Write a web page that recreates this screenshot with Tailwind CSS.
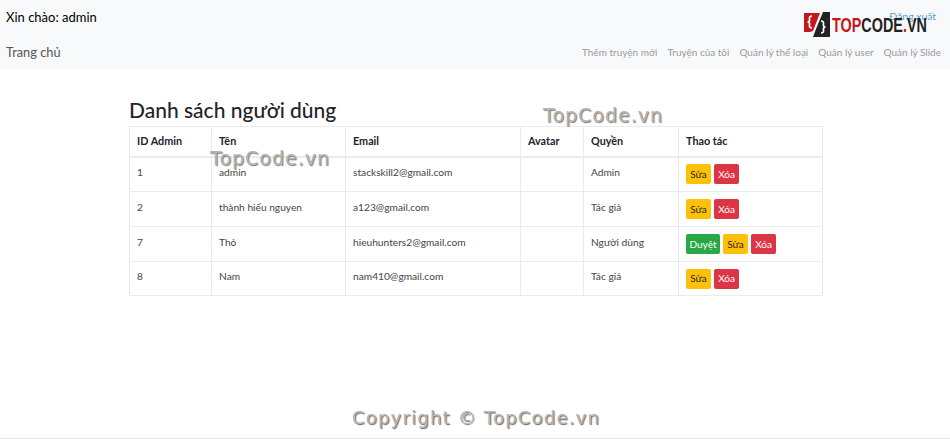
<!DOCTYPE html>
<html lang="en">
<head>
  <meta charset="UTF-8" />
  <title>Danh sách người dùng</title>
  <script src="https://cdn.jsdelivr.net/npm/@tailwindcss/browser@4"></script>
</head>
<body class="relative h-[439px] overflow-hidden bg-white font-['Lato','Noto_Sans',sans-serif] text-[#212529]">
  <!-- navbar -->
  <div class="h-[69px] bg-[#f8f9fa] px-[6px]">
    <div class="flex h-[36px] items-center justify-between">
      <span class="text-[13px] text-black">Xin chào: admin</span>
      <a class="mr-[8px] mt-[-2px] text-[10.4px] text-[#5a9fd0]">Đăng xuất</a>
    </div>
    <div class="flex h-[33px] items-center justify-between">
      <span class="text-[12.8px] text-[#555]">Trang chủ</span>
      <div class="mr-[3px] flex gap-[10px] text-[10px] text-[#9a9a9a]">
        <a>Thêm truyện mới</a>
        <a>Truyện của tôi</a>
        <a>Quản lý thể loại</a>
        <a>Quản lý user</a>
        <a>Quản lý Slide</a>
      </div>
    </div>
  </div>

  <!-- content -->
  <div class="ml-[129px] w-[694px]">
    <h2 class="mt-[26px] mb-[1px] h-[30px] text-[21px] leading-[30px] font-medium">Danh sách người dùng</h2>
    <table class="w-[693px] table-fixed border-collapse text-[10.2px] text-[#444]">
      <colgroup>
        <col class="w-[82px]" /><col class="w-[134px]" /><col class="w-[175px]" /><col class="w-[63px]" /><col class="w-[95px]" /><col class="w-[144px]" />
      </colgroup>
      <thead class="text-[10.8px] text-[#212529]">
        <tr class="h-[30px]">
          <th class="border border-b-2 border-[#e9ecef] pl-[7px] text-left font-bold">ID Admin</th>
          <th class="border border-b-2 border-[#e9ecef] pl-[7px] text-left font-bold">Tên</th>
          <th class="border border-b-2 border-[#e9ecef] pl-[7px] text-left font-bold">Email</th>
          <th class="border border-b-2 border-[#e9ecef] pl-[7px] text-left font-bold">Avatar</th>
          <th class="border border-b-2 border-[#e9ecef] pl-[7px] text-left font-bold">Quyền</th>
          <th class="border border-b-2 border-[#e9ecef] pl-[7px] text-left font-bold">Thao tác</th>
        </tr>
      </thead>
      <tbody>
        <tr class="h-[35px]">
          <td class="border border-[#e9ecef] pl-[7px] pb-[4px]">1</td>
          <td class="border border-[#e9ecef] pl-[7px] pb-[4px]">admin</td>
          <td class="border border-[#e9ecef] pl-[7px] pb-[4px]">stackskill2@gmail.com</td>
          <td class="border border-[#e9ecef] pl-[7px]"></td>
          <td class="border border-[#e9ecef] pl-[7px] pb-[4px]">Admin</td>
          <td class="border border-[#e9ecef] pl-[7px]">
            <div class="flex gap-[3px]">
              <span class="flex h-[20px] w-[25px] items-center justify-center rounded-[2px] bg-[#ffc107] text-[10px] text-[#212529]">Sửa</span>
              <span class="flex h-[20px] w-[25px] items-center justify-center rounded-[2px] bg-[#dc3545] text-[10px] text-white">Xóa</span>
            </div>
          </td>
        </tr>
        <tr class="h-[35px]">
          <td class="border border-[#e9ecef] pl-[7px] pb-[3px]">2</td>
          <td class="border border-[#e9ecef] pl-[7px] pb-[3px]">thành hiếu nguyen</td>
          <td class="border border-[#e9ecef] pl-[7px] pb-[3px]">a123@gmail.com</td>
          <td class="border border-[#e9ecef] pl-[7px]"></td>
          <td class="border border-[#e9ecef] pl-[7px] pb-[3px]">Tác giả</td>
          <td class="border border-[#e9ecef] pl-[7px]">
            <div class="flex gap-[3px]">
              <span class="flex h-[20px] w-[25px] items-center justify-center rounded-[2px] bg-[#ffc107] text-[10px] text-[#212529]">Sửa</span>
              <span class="flex h-[20px] w-[25px] items-center justify-center rounded-[2px] bg-[#dc3545] text-[10px] text-white">Xóa</span>
            </div>
          </td>
        </tr>
        <tr class="h-[35px]">
          <td class="border border-[#e9ecef] pl-[7px] pb-[3px]">7</td>
          <td class="border border-[#e9ecef] pl-[7px] pb-[3px]">Thỏ</td>
          <td class="border border-[#e9ecef] pl-[7px] pb-[3px]">hieuhunters2@gmail.com</td>
          <td class="border border-[#e9ecef] pl-[7px]"></td>
          <td class="border border-[#e9ecef] pl-[7px] pb-[3px]">Người dùng</td>
          <td class="border border-[#e9ecef] pl-[7px]">
            <div class="flex gap-[3px]">
              <span class="flex h-[20px] w-[34px] items-center justify-center rounded-[2px] bg-[#28a745] text-[10px] text-white">Duyệt</span>
              <span class="flex h-[20px] w-[25px] items-center justify-center rounded-[2px] bg-[#ffc107] text-[10px] text-[#212529]">Sửa</span>
              <span class="flex h-[20px] w-[25px] items-center justify-center rounded-[2px] bg-[#dc3545] text-[10px] text-white">Xóa</span>
            </div>
          </td>
        </tr>
        <tr class="h-[34px]">
          <td class="border border-[#e9ecef] pl-[7px] pb-[3px]">8</td>
          <td class="border border-[#e9ecef] pl-[7px] pb-[3px]">Nam</td>
          <td class="border border-[#e9ecef] pl-[7px] pb-[3px]">nam410@gmail.com</td>
          <td class="border border-[#e9ecef] pl-[7px]"></td>
          <td class="border border-[#e9ecef] pl-[7px] pb-[3px]">Tác giả</td>
          <td class="border border-[#e9ecef] pl-[7px]">
            <div class="flex gap-[3px]">
              <span class="flex h-[20px] w-[25px] items-center justify-center rounded-[2px] bg-[#ffc107] text-[10px] text-[#212529]">Sửa</span>
              <span class="flex h-[20px] w-[25px] items-center justify-center rounded-[2px] bg-[#dc3545] text-[10px] text-white">Xóa</span>
            </div>
          </td>
        </tr>
      </tbody>
    </table>
  </div>

  <!-- watermarks lying over the page -->
  <div class="absolute left-[804px] top-[12px] flex items-center">
    <svg width="26" height="25" viewBox="0 0 26 25">
      <path d="M0 1 H16 L9 19 L6 20 H0 Z" fill="#c8171c" />
      <path d="M19 0 H26 V25 H9 L12 17 Z" fill="#222" />
      <path d="M8 4 Q5 4 5.5 7 Q6 10 3.5 10 Q6 10 5.5 13 Q5 16 8 16" fill="none" stroke="#fff" stroke-width="1.7" />
      <path d="M17 9 Q20 9 19.5 12 Q19 15 21.5 15 Q19 15 19.5 18 Q20 21 17 21" fill="none" stroke="#fff" stroke-width="1.7" />
    </svg>
    <span class="ml-[2px] inline-block origin-left scale-x-[.72] font-['Liberation_Sans',sans-serif] text-[20px] leading-none font-bold"><span class="text-[#c8171c]">TOP</span><span class="text-[#222]">CODE</span><span class="text-[#c8171c]">.</span><span class="text-[#222]">VN</span></span>
  </div>
  <div class="absolute left-[210px] top-[147px] font-['DejaVu_Sans',sans-serif] text-[19px] leading-[22px] tracking-[1px] text-[#b5b5b5] [text-shadow:1px_1px_1px_#777]">TopCode.vn</div>
  <div class="absolute left-[543px] top-[104px] font-['DejaVu_Sans',sans-serif] text-[19px] leading-[22px] tracking-[1px] text-[#b5b5b5] [text-shadow:1px_1px_1px_#777]">TopCode.vn</div>
  <div class="absolute left-[352px] top-[407px] font-['DejaVu_Sans',sans-serif] text-[18px] leading-[22px] tracking-[1.2px] text-[#b5b5b5] [text-shadow:1px_1px_1px_#666]">Copyright © TopCode.vn</div>
  <div class="absolute bottom-0 left-0 h-px w-full bg-[#e5e5e5]"></div>
</body>
</html>
